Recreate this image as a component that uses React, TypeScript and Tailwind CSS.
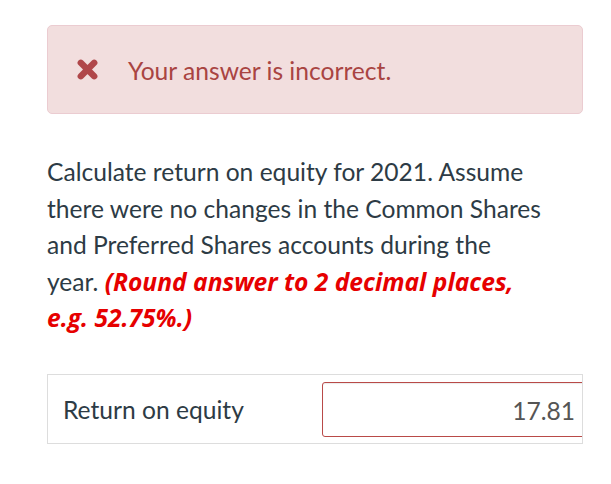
const font = { fontFamily: "Lato, 'Open Sans', sans-serif" };

function CrossIcon() {
  return (
    <svg width="21" height="21" viewBox="0 0 21 21" className="shrink-0">
      <path d="M3.8 3.8L17.2 17.2M17.2 3.8L3.8 17.2" stroke="#b0474a" strokeWidth="6.4" strokeLinecap="round" />
    </svg>
  );
}

export default function App() {
  return (
    <div className="w-[611px] h-[484px] bg-white pl-[47px] pr-[28px] pt-[25px]" style={font}>
      <div className="flex items-center h-[89px] border border-[#ebccd1] bg-[#f2dede] rounded-[5px] pl-[29px] text-[#a94442]">
        <CrossIcon />
        <span className="ml-[30px] pt-[4px] text-[24.6px] leading-none">Your answer is incorrect.</span>
      </div>

      <p className="mt-[40px] w-[498px] text-[24.6px] leading-[36.6px] text-[#2d3b45]">
        Calculate return on equity for 2021. Assume there were no changes in the Common Shares and Preferred Shares accounts during the year.{" "}
        <span className="font-bold italic leading-[36.6px] text-[#e60000]" style={{ fontFamily: "'Open Sans', sans-serif" }}>
          (Round answer to 2 decimal places, e.g. 52.75%.)
        </span>
      </p>

      <div className="mt-[37px] flex items-center h-[70px] border border-[#dddddd]">
        <div className="w-[274px] pl-[15px] pt-[3px] text-[24.6px] text-[#2d3b45]">Return on equity</div>
        <div className="flex-1 h-[55px] mt-[1px] overflow-hidden">
          <div className="w-[300px] h-full border border-[#b94a48] rounded-[3px] shadow-[inset_0_1px_1px_rgba(0,0,0,0.08)] flex items-center">
            <span className="w-[252px] pt-[3px] text-right text-[24.6px] text-[#555555]">17.81</span>
          </div>
        </div>
      </div>
    </div>
  );
}
